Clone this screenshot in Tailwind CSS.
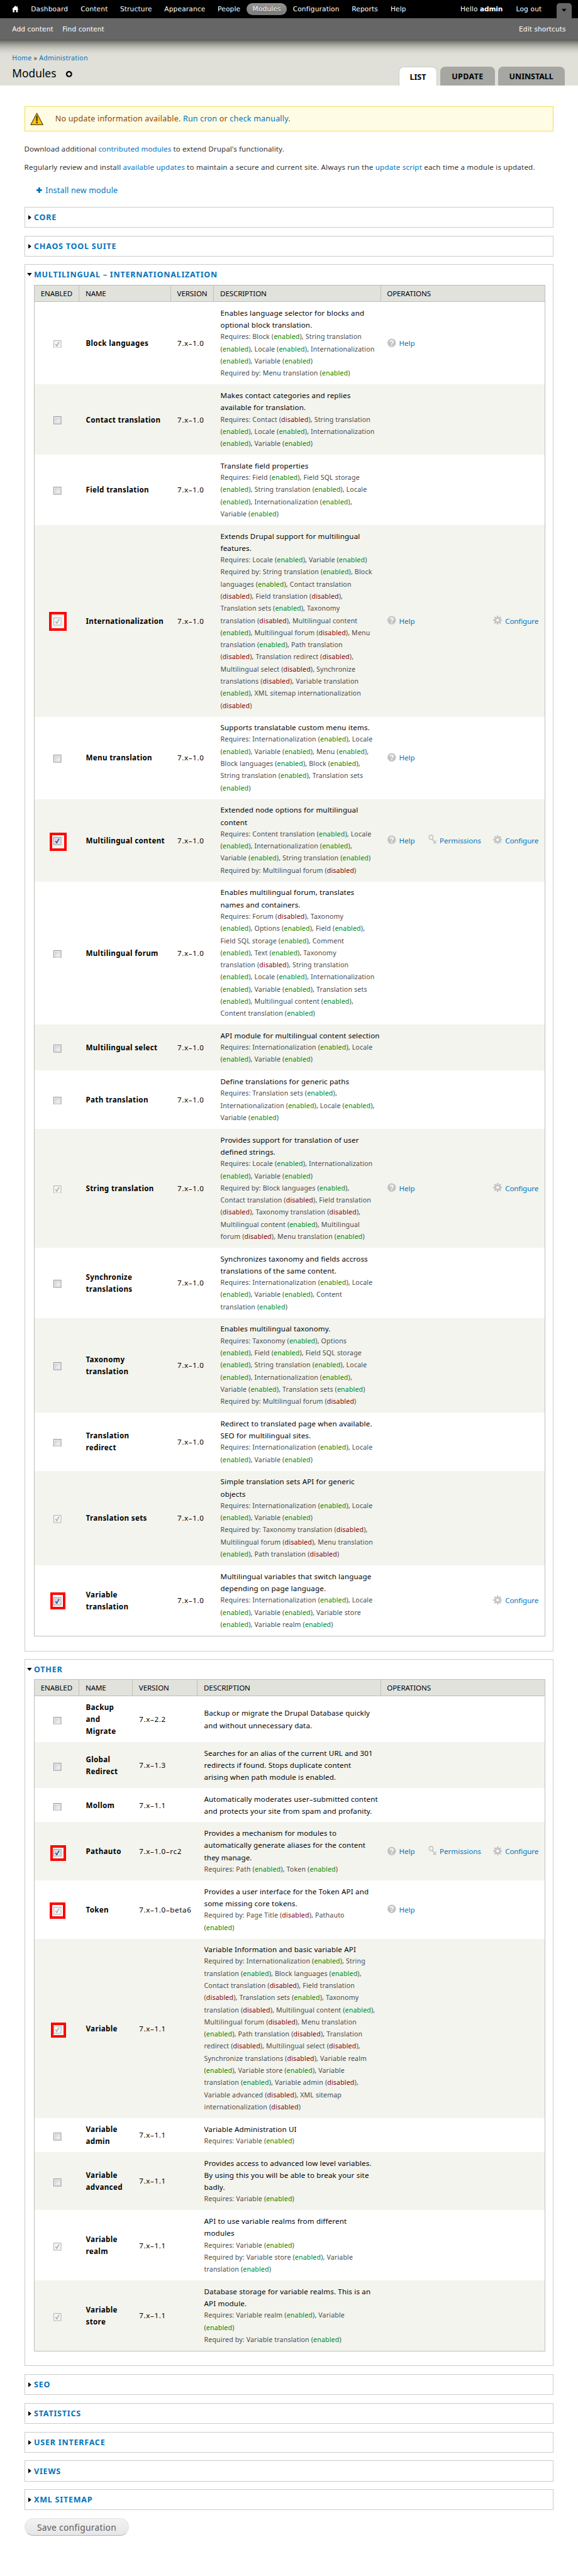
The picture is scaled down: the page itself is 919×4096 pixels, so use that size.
<!DOCTYPE html>
<html lang="en">
<head>
<meta charset="utf-8">
<title>Modules</title>
<script src="https://cdn.jsdelivr.net/npm/@tailwindcss/browser@4"></script>
</head>
<body class="bg-white overflow-hidden">
<div class="[zoom:0.96425] w-[953px] h-[4247px] overflow-hidden bg-white font-['Noto_Sans',sans-serif] text-[12px] leading-[20px] text-black">

  <!-- Toolbar -->
  <div class="h-[30px] bg-black text-white flex justify-between font-['DejaVu_Sans',sans-serif] text-[11px] tracking-[0.17px] leading-[20px]">
    <div class="flex items-center pl-[20px] whitespace-nowrap">
      <svg class="w-[11px] h-[11px] mr-[10px]" viewBox="0 0 11 11"><path fill="#fff" d="M5.5 0 0 6h1.4v5h2.8V7.2h2.6V11h2.8V6H11L9.3 4.100V1H7.800v1.500z"/></svg>
      <span class="w-[82px] pl-[10px]">Dashboard</span>
      <span class="w-[65px] pl-[10px]">Content</span>
      <span class="w-[73px] pl-[10px]">Structure</span>
      <span class="w-[88px] pl-[10px]">Appearance</span>
      <span class="w-[58px] pl-[10px]">People</span>
      <span class="w-[66px] h-[20px] rounded-full text-center bg-gradient-to-b from-[#949494] to-[#7b7b7b] [text-shadow:0_1px_0_#333]">Modules</span>
      <span class="w-[97px] pl-[10px]">Configuration</span>
      <span class="w-[64px] pl-[10px]">Reports</span>
      <span class="pl-[10px]">Help</span>
    </div>
    <div class="flex items-center whitespace-nowrap">
      <span class="w-[92px]">Hello <b class="tracking-[-0.2px]">admin</b></span>
      <span class="w-[67px]">Log out</span>
      <span class="mt-[5px] mr-[10px] w-[25px] h-[25px] bg-[#666] rounded-t-[5px] flex items-center justify-center"><svg class="w-[8px] h-[5px]" viewBox="0 0 8 5"><path d="M0 0h8L4 5z"/></svg></span>
    </div>
  </div>
  <div class="h-[35px] bg-[#666] text-white flex justify-between pl-[20px] pr-[20px] pt-[8px] font-['DejaVu_Sans',sans-serif] text-[11px] tracking-[0.09px]">
    <div class="flex gap-[15px]"><span>Add content</span><span>Find content</span></div>
    <span>Edit shortcuts</span>
  </div>

  <!-- Page header -->
  <div class="h-[76px] bg-[#e0e0d8] flex justify-between">
    <div class="w-full h-[76px] flex justify-between bg-[linear-gradient(to_bottom,#565653_0px,#82827d_4px,#aeaea7_10px,#cfcfc7_17px,#dddDd5_23px,#e0e0d8_28px)]">
      <div class="pl-[20px] pt-[21px]">
        <div class="text-[11px] tracking-[0.28px] text-[#0074bd]">Home <span class="text-[#553311]">»</span> Administration</div>
        <div class="flex items-center mt-[4px]">
          <span class="text-[18px] leading-[22px]">Modules</span>
          <svg class="w-[12px] h-[12px] ml-[15px] mt-[2px]" viewBox="0 0 12 12"><circle cx="6" cy="6" r="5.500" fill="#000" stroke="#fff" stroke-width=".6"/><path d="M6 3v6M3 6h6" stroke="#fff" stroke-width="2.200"/></svg>
        </div>
      </div>
      <div class="flex items-end gap-[5px] pr-[22px] font-bold text-[13px] leading-[34px] text-center">
        <span class="w-[64px] h-[31px] bg-white border border-b-0 border-[#ccc] rounded-t-[8px]">LIST</span>
        <span class="w-[90px] h-[31px] bg-[#a6a7a2] rounded-t-[8px] tracking-[0.4px]">UPDATE</span>
        <span class="w-[110px] h-[31px] bg-[#a6a7a2] rounded-t-[8px] tracking-[-0.05px]">UNINSTALL</span>
      </div>
    </div>
  </div>

  <div class="px-[40px]">
    <div class="mt-[34px] h-[42px] border border-[#eedd55] bg-[#fffce5] flex items-center pl-[9px] text-[13px] tracking-[0.2px] text-[#8c4600] whitespace-nowrap">
      <svg class="w-[22px] h-[21px] mr-[19px]" viewBox="0 0 22 21"><path d="M11 1 21 20H1z" fill="#fbc20a" stroke="#5c4a1c" stroke-width="1.300" stroke-linejoin="round"/><path d="M11 6.500v6.500" stroke="#4a3a10" stroke-width="2.600" stroke-linecap="round"/><circle cx="11" cy="16.500" r="1.500" fill="#4a3a10"/></svg>
      <span>No update information available. <span class="text-[#0074bd]">Run cron</span> or <span class="text-[#0074bd]">check manually</span>.</span>
    </div>
    <p class="mt-[18.500px] text-[#333] tracking-[0.120px] whitespace-nowrap">Download additional <span class="text-[#0074bd]">contributed modules</span> to extend Drupal's functionality.</p>
    <p class="mt-[10px] text-[#333] tracking-[0.205px] whitespace-nowrap">Regularly review and install <span class="text-[#0074bd]">available updates</span> to maintain a secure and current site. Always run the <span class="text-[#0074bd]">update script</span> each time a module is updated.</p>
    <div class="mt-[18.500px] pl-[20px] h-[20px] flex items-center text-[13px] tracking-[0.18px] text-[#0074bd]">
      <svg class="w-[9px] h-[9px] mr-[6px]" viewBox="0 0 9 9"><path d="M4.500 0v9M0 4.500h9" stroke="#0074bd" stroke-width="3"/></svg>Install new module
    </div>
    <div id="sets" class="mt-[17px] flex flex-col"></div>
    <div class="mt-0 w-[173px] h-[29px] rounded-full border border-[#e4e4e4] border-b-[#b4b4b4] bg-gradient-to-b from-[#f3f3f3] to-[#e6e6e6] text-[#5a5a5a] text-[14.3px] leading-[28px] tracking-[0.3px] text-center">Save configuration</div>
  </div>
</div>

<script>
const ok = '<span class="text-[#008800]">enabled</span>';
const no = '<span class="text-[#800000]">disabled</span>';
const status = s => s.replace(/\(e\)/g, '(' + ok + ')').replace(/\(d\)/g, '(' + no + ')').replace(/\|/g, '<br>');

const tick = color => `<path d="M3.500 6.500 5.500 9.500 9.200 2.800" fill="none" stroke="${color}" stroke-width="1.700"/>`;
const boxes = {
  off: '<rect x=".5" y=".5" width="12" height="12" fill="#fafafa" stroke="#8e8f8f"/><rect x="2.500" y="2.500" width="8" height="8" fill="url(#shade)" stroke="#d0d3d8"/>',
  on: '<rect x=".5" y=".5" width="12" height="12" fill="#fafafa" stroke="#8e8f8f"/><rect x="2.500" y="2.500" width="8" height="8" fill="url(#shade)" stroke="#c4c8d0"/>' + tick('#33499a'),
  dim: '<rect x=".5" y=".5" width="12" height="12" fill="#f4f4f4" stroke="#b4b4b4"/>' + tick('#b2b2b2'),
};
const defs = '<defs><linearGradient id="shade" x1="0" y1="0" x2="1" y2="1"><stop offset="0" stop-color="#ccd0d6"/><stop offset="1" stop-color="#fbfbfb"/></linearGradient></defs>';
const check = (kind, mark) => `<div class="relative w-[13px] h-[13px]"><svg class="w-[13px] h-[13px]" viewBox="0 0 13 13">${defs}${boxes[kind]}</svg>${mark || ''}</div>`;

const help = '<span class="w-[67px] flex items-center gap-[5px]"><svg class="w-[14px] h-[15px] -mt-[2px]" viewBox="0 0 14 15"><circle cx="7" cy="7.500" r="7" fill="#c4c4c4"/><path d="M4.700 6C4.700 3 9.500 3 9.500 5.700 9.500 7.500 7.100 7.400 7.100 9.200" fill="none" stroke="#fff" stroke-width="1.700"/><circle cx="7.100" cy="11.400" r="1.100" fill="#fff"/></svg>Help</span>';
const perm = '<span class="w-[107px] flex items-center gap-[5px]"><svg class="w-[14px] h-[16px] -mt-[3px]" viewBox="0 0 14 16"><ellipse cx="4.500" cy="4.500" rx="3.300" ry="3.600" fill="none" stroke="#c4c4c4" stroke-width="1.700"/><path d="M6.500 7.500 12.500 15M8.500 14.500 11 12M11.500 11.500 13.500 10" fill="none" stroke="#c4c4c4" stroke-width="2"/></svg>Permissions</span>';
const conf = '<span class="flex items-center gap-[5px] tracking-[-0.1px]"><svg class="w-[15px] h-[15px] -mt-[2px]" viewBox="0 0 15 15"><g stroke="#c4c4c4" stroke-width="2.600"><path d="M7.500 0v15M0 7.500h15M2.300 2.300l10.400 10.400M12.700 2.300 2.300 12.700"/></g><circle cx="7.500" cy="7.500" r="5.200" fill="#c4c4c4"/><circle cx="7.500" cy="7.500" r="2.200" fill="#fff"/></svg>Configure</span>';
const gap = '<span class="w-[67px]"></span>';
const gap2 = '<span class="w-[107px]"></span>';
const ops = { h: help, hc: help + gap2 + conf, hpc: help + perm + conf, c: gap + gap2 + conf };

// [checkbox, name, version, description, requirements, operations, highlight frame]
const multi = [
  ['dim','Block languages','7.x–1.0','Enables language selector for blocks and|optional block translation.','Requires: Block (e), String translation|(e), Locale (e), Internationalization|(e), Variable (e)|Required by: Menu translation (e)','h'],
  ['off','Contact translation','7.x–1.0','Makes contact categories and replies|available for translation.','Requires: Contact (d), String translation|(e), Locale (e), Internationalization|(e), Variable (e)'],
  ['off','Field translation','7.x–1.0','Translate field properties','Requires: Field (e), Field SQL storage|(e), String translation (e), Locale|(e), Internationalization (e),|Variable (e)'],
  ['dim','Internationalization','7.x–1.0','Extends Drupal support for multilingual|features.','Requires: Locale (e), Variable (e)|Required by: String translation (e), Block|languages (e), Contact translation|(d), Field translation (d),|Translation sets (e), Taxonomy|translation (d), Multilingual content|(e), Multilingual forum (d), Menu|translation (e), Path translation|(d), Translation redirect (d),|Multilingual select (d), Synchronize|translations (d), Variable translation|(e), XML sitemap internationalization|(d)','hc','<i class="absolute -left-[8px] -top-[10px] w-[29px] h-[31px] border-[4.200px] border-[#f00]"></i>'],
  ['off','Menu translation','7.x–1.0','Supports translatable custom menu items.','Requires: Internationalization (e), Locale|(e), Variable (e), Menu (e),|Block languages (e), Block (e),|String translation (e), Translation sets|(e)','h'],
  ['on','Multilingual content','7.x–1.0','Extended node options for multilingual|content','Requires: Content translation (e), Locale|(e), Internationalization (e),|Variable (e), String translation (e)|Required by: Multilingual forum (d)','hpc','<i class="absolute -left-[7px] -top-[8px] w-[28px] h-[30px] border-[4.200px] border-[#f00]"></i>'],
  ['off','Multilingual forum','7.x–1.0','Enables multilingual forum, translates|names and containers.','Requires: Forum (d), Taxonomy|(e), Options (e), Field (e),|Field SQL storage (e), Comment|(e), Text (e), Taxonomy|translation (d), String translation|(e), Locale (e), Internationalization|(e), Variable (e), Translation sets|(e), Multilingual content (e),|Content translation (e)'],
  ['off','Multilingual select','7.x–1.0','API module for multilingual content selection','Requires: Internationalization (e), Locale|(e), Variable (e)'],
  ['off','Path translation','7.x–1.0','Define translations for generic paths','Requires: Translation sets (e),|Internationalization (e), Locale (e),|Variable (e)'],
  ['dim','String translation','7.x–1.0','Provides support for translation of user|defined strings.','Requires: Locale (e), Internationalization|(e), Variable (e)|Required by: Block languages (e),|Contact translation (d), Field translation|(d), Taxonomy translation (d),|Multilingual content (e), Multilingual|forum (d), Menu translation (e)','hc'],
  ['off','Synchronize|translations','7.x–1.0','Synchronizes taxonomy and fields accross|translations of the same content.','Requires: Internationalization (e), Locale|(e), Variable (e), Content|translation (e)'],
  ['off','Taxonomy|translation','7.x–1.0','Enables multilingual taxonomy.','Requires: Taxonomy (e), Options|(e), Field (e), Field SQL storage|(e), String translation (e), Locale|(e), Internationalization (e),|Variable (e), Translation sets (e)|Required by: Multilingual forum (d)'],
  ['off','Translation|redirect','7.x–1.0','Redirect to translated page when available.|SEO for multilingual sites.','Requires: Internationalization (e), Locale|(e), Variable (e)'],
  ['dim','Translation sets','7.x–1.0','Simple translation sets API for generic|objects','Requires: Internationalization (e), Locale|(e), Variable (e)|Required by: Taxonomy translation (d),|Multilingual forum (d), Menu translation|(e), Path translation (d)'],
  ['on','Variable|translation','7.x–1.0','Multilingual variables that switch language|depending on page language.','Requires: Internationalization (e), Locale|(e), Variable (e), Variable store|(e), Variable realm (e)','c','<i class="absolute -left-[6px] -top-[8px] w-[25px] h-[28px] border-[4.200px] border-[#f00]"></i>'],
];
const other = [
  ['off','Backup|and|Migrate','7.x–2.2','Backup or migrate the Drupal Database quickly|and without unnecessary data.',''],
  ['off','Global|Redirect','7.x–1.3','Searches for an alias of the current URL and 301|redirects if found. Stops duplicate content|arising when path module is enabled.',''],
  ['off','Mollom','7.x–1.1','Automatically moderates user–submitted content|and protects your site from spam and profanity.',''],
  ['on','Pathauto','7.x–1.0–rc2','Provides a mechanism for modules to|automatically generate aliases for the content|they manage.','Requires: Path (e), Token (e)','hpc','<i class="absolute -left-[6px] -top-[6px] w-[26px] h-[26px] border-[4.200px] border-[#f00]"></i>'],
  ['dim','Token','7.x–1.0–beta6','Provides a user interface for the Token API and|some missing core tokens.','Required by: Page Title (d), Pathauto|(e)','h','<i class="absolute -left-[7px] -top-[8px] w-[26px] h-[27px] border-[4.200px] border-[#f00]"></i>'],
  ['dim','Variable','7.x–1.1','Variable Information and basic variable API','Required by: Internationalization (e), String|translation (e), Block languages (e),|Contact translation (d), Field translation|(d), Translation sets (e), Taxonomy|translation (d), Multilingual content (e),|Multilingual forum (d), Menu translation|(e), Path translation (d), Translation|redirect (d), Multilingual select (d),|Synchronize translations (d), Variable realm|(e), Variable store (e), Variable|translation (e), Variable admin (d),|Variable advanced (d), XML sitemap|internationalization (d)','','<i class="absolute -left-[5px] -top-[6px] w-[25px] h-[25px] border-[4.200px] border-[#f00]"></i>'],
  ['off','Variable|admin','7.x–1.1','Variable Administration UI','Requires: Variable (e)'],
  ['off','Variable|advanced','7.x–1.1','Provides access to advanced low level variables.|By using this you will be able to break your site|badly.','Requires: Variable (e)'],
  ['dim','Variable|realm','7.x–1.1','API to use variable realms from different|modules','Requires: Variable (e)|Required by: Variable store (e), Variable|translation (e)'],
  ['dim','Variable|store','7.x–1.1','Database storage for variable realms. This is an|API module.','Requires: Variable realm (e), Variable|(e)|Required by: Variable translation (e)'],
];

const table = (rows, cols, boxShift) => `
<div class="ml-[15px] mr-[13px] border border-[#bebfb9] whitespace-nowrap">
  <div class="grid ${cols} h-[27px] bg-[#e1e2dc] border-b border-[#bebfb9] leading-[26px] tracking-[-0.1px]">
    ${['ENABLED','NAME','VERSION','DESCRIPTION','OPERATIONS'].map((t, i) => `<div class="pl-[10px] ${i < 4 ? 'border-r border-[#bebfb9]' : ''}">${t}</div>`).join('')}
  </div>
  ${rows.map((r, i) => `<div class="grid ${cols} items-center py-[8px] ${i % 2 ? 'bg-[#f3f4ee]' : 'bg-white'}">
    <div class="flex justify-center pl-[2px] ${boxShift}">${check(r[0], r[6])}</div>
    <div class="pl-[10.500px] font-bold tracking-[0.38px]">${status(r[1])}</div>
    <div class="pl-[10.500px] tracking-[0.68px]">${r[2]}</div>
    <div class="pl-[10.500px] tracking-[0.17px]">${status(r[3])}${r[4] ? `<div class="text-[11px] tracking-[0.17px] text-[#4a4a4a]">${status(r[4])}</div>` : ''}</div>
    <div class="pl-[11px] flex text-[#0074bd]">${ops[r[5]] || ''}</div>
  </div>`).join('')}
</div>`;

const legend = (t, open) => `<div class="flex items-center text-[13px] font-bold tracking-[0.82px] text-[#0074bd]"><span class="w-[15px] pl-[5px] flex">${open
  ? '<svg class="w-[8px] h-[5px] -ml-[1px]" viewBox="0 0 8 5"><path d="M0 0h8L4 5z"/></svg>'
  : '<svg class="w-[5px] h-[8px] ml-[1px]" viewBox="0 0 5 8"><path d="M0 0v8L5 4z"/></svg>'}</span>${t}</div>`;
const closed = t => `<div class="h-[34.500px] mb-[13px] border border-[#ccc] pt-[6.500px]">${legend(t, false)}</div>`;

document.getElementById('sets').innerHTML =
  closed('CORE') + closed('CHAOS TOOL SUITE') +
  `<div class="h-[2287px] mb-[13px] border border-[#ccc] pt-[6px]">${legend('MULTILINGUAL – INTERNATIONALIZATION', true)}<div class="h-[7px]"></div>${table(multi, 'grid-cols-[74px_151px_71px_275px_270px]', 'pt-[3px]')}</div>` +
  `<div class="h-[1166px] mb-[13px] border border-[#ccc] pt-[6px]">${legend('OTHER', true)}<div class="h-[6px]"></div>${table(other, 'grid-cols-[74px_88px_107px_302px_270px]', 'pt-[5px]')}</div>` +
  ['SEO','STATISTICS','USER INTERFACE','VIEWS','XML SITEMAP'].map(closed).join('');
</script>
</body>
</html>
